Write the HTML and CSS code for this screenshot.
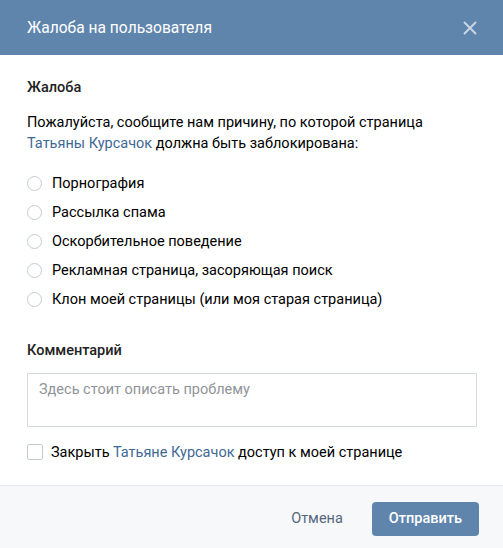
FILE: index.html
```html
<!DOCTYPE html>
<html lang="ru">
<head>
<meta charset="utf-8">
<link rel="stylesheet" href="styles.css">
</head>
<body>
<div class="box">
  <div class="box-head">
    <div class="box-title">Жалоба на пользователя</div>
    <svg class="box-close" width="14" height="14" viewBox="0 0 14 14"><path d="M1.5 1.5 L12.5 12.5 M12.5 1.5 L1.5 12.5" stroke="#c9d5e2" stroke-width="2" stroke-linecap="round"/></svg>
  </div>
  <div class="box-body">
    <div class="section-title">Жалоба</div>
    <div class="intro">Пожалуйста, сообщите нам причину, по которой страница <a class="link">Татьяны Курсачок</a> должна быть заблокирована:</div>
    <div class="radios">
      <div class="radio"><span class="radio-circle"></span><span>Порнография</span></div>
      <div class="radio"><span class="radio-circle"></span><span>Рассылка спама</span></div>
      <div class="radio"><span class="radio-circle"></span><span>Оскорбительное поведение</span></div>
      <div class="radio"><span class="radio-circle"></span><span>Рекламная страница, засоряющая поиск</span></div>
      <div class="radio"><span class="radio-circle"></span><span>Клон моей страницы (или моя старая страница)</span></div>
    </div>
    <div class="section-title comment-title">Комментарий</div>
    <div class="textarea">Здесь стоит описать проблему</div>
    <div class="check"><span class="check-box"></span><span>Закрыть <a class="link">Татьяне Курсачок</a> доступ к моей странице</span></div>
  </div>
  <div class="box-foot">
    <span class="btn-cancel">Отмена</span>
    <span class="btn-send">Отправить</span>
  </div>
</div>
</body>
</html>
```
FILE: styles.css
```css
html, body {
  margin: 0;
  padding: 0;
  background: #fff;
}
body {
  font-family: Roboto, "Open Sans", "Liberation Sans", sans-serif;
  color: #000;
  font-size: 14.5px;
}
.box {
  width: 503px;
  height: 548px;
  display: flex;
  flex-direction: column;
  overflow: hidden;
}
.box-head {
  height: 55px;
  flex: none;
  background: #5f85ad;
  display: flex;
  align-items: center;
  justify-content: space-between;
  padding: 0 26px 0 27px;
}
.box-title {
  color: #fff;
  font-size: 15.6px;
}
.box-close {
  display: block;
}
.box-body {
  padding: 24px 26px 0 27px;
  height: 430px;
  flex: none;
  box-sizing: border-box;
}
.section-title {
  font-weight: 500;
  font-size: 14.5px;
  line-height: 18px;
  color: #222;
}
.intro {
  margin-top: 15px;
  line-height: 21px;
  color: #000;
}
.link {
  color: #3f6995;
}
.radios {
  margin-top: 15px;
  display: flex;
  flex-direction: column;
}
.radio {
  display: flex;
  align-items: center;
  height: 29px;
}
.radio-circle {
  width: 13px;
  height: 13px;
  border: 1px solid #c3cbd4;
  border-radius: 50%;
  margin-right: 10px;
  flex: none;
}
.comment-title {
  margin-top: 28px;
}
.textarea {
  margin-top: 13px;
  height: 54px;
  box-sizing: border-box;
  border: 1px solid #d3d9de;
  padding: 7px 11px;
  color: #909499;
  line-height: 18px;
}
.check {
  margin-top: 16px;
  display: flex;
  align-items: center;
  height: 18px;
}
.check-box {
  width: 14px;
  height: 14px;
  border: 1px solid #c3cbd4;
  border-radius: 2px;
  margin-right: 8px;
  flex: none;
}
.box-foot {
  flex: 1;
  background: #f7f8fa;
  border-top: 1px solid #e7e8ec;
  display: flex;
  align-items: flex-start;
  justify-content: flex-end;
  padding: 16px 24px 0 0;
}
.btn-cancel {
  color: #55677d;
  line-height: 34px;
  margin-right: 29px;
}
.btn-send {
  background: #5f85ad;
  color: #fff;
  border-radius: 4px;
  line-height: 34px;
  padding: 0 17px 0 17px;
  font-weight: 500;
}
```
